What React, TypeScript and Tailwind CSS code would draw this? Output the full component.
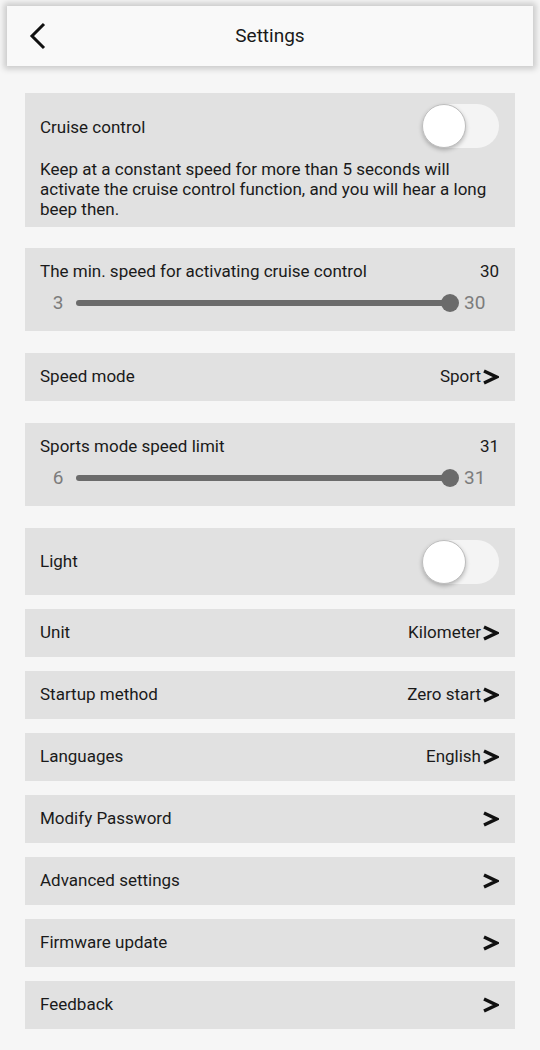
import React from "react";

const font = { fontFamily: "Roboto, 'Noto Sans', sans-serif" };

function Toggle() {
  return (
    <div className="relative w-[77px] h-[44px] rounded-full bg-[#f4f4f4]">
      <div className="absolute left-0 top-0 w-[44px] h-[44px] rounded-full bg-white border border-[#bdbdbd] shadow-[0_2px_4px_rgba(0,0,0,0.25)]" />
    </div>
  );
}

function Chevron() {
  return (
    <svg width="17" height="18" viewBox="0 0 17 18" className="ml-[1px]">
      <path d="M2 3 L14.5 9 L2 15" fill="none" stroke="#111" strokeWidth="3.4" strokeLinejoin="miter" />
    </svg>
  );
}

function Slider({ title, min, max }: { title: string; min: string; max: string }) {
  return (
    <div className="bg-[#e1e1e1] h-[83px] px-[15px] pt-[12px]">
      <div className="flex justify-between text-[17px] text-[#1a1a1a] leading-[22px]">
        <span>{title}</span>
        <span className="pr-[1px]">{max}</span>
      </div>
      <div className="flex items-center mt-[11px] h-[20px]">
        <span className="w-[36px] text-center text-[19px] text-[#7c7c7c]">{min}</span>
        <div className="relative flex-1 h-[6px] rounded-full bg-[#6b6b6b]">
          <div className="absolute right-[-9px] top-[-6px] w-[18px] h-[18px] rounded-full bg-[#6b6b6b]" />
        </div>
        <span className="w-[50px] pl-[14px] text-[19px] text-[#7c7c7c]">{max}</span>
      </div>
    </div>
  );
}

function NavRow({ label, value }: { label: string; value?: string }) {
  return (
    <div className="bg-[#e1e1e1] h-[48px] pl-[15px] pr-[16px] flex items-center justify-between text-[17px] text-[#1a1a1a]">
      <span>{label}</span>
      <span className="flex items-center">
        {value && <span>{value}</span>}
        <Chevron />
      </span>
    </div>
  );
}

export default function App() {
  return (
    <div style={font} className="w-[540px] h-[1050px] bg-[#f6f6f6] overflow-hidden pt-[6px]">
      <div className="mx-[7px] h-[60px] bg-[#f9f9f9] shadow-[0_0_6px_3px_rgba(0,0,0,0.18)] flex items-center relative">
        <svg width="20" height="28" viewBox="0 0 20 28" className="absolute left-[21px] top-[16px]">
          <path d="M16 2 L4 14 L16 26" fill="none" stroke="#111" strokeWidth="3" />
        </svg>
        <div className="w-full text-center text-[19px] text-[#1a1a1a]">Settings</div>
      </div>

      <div className="px-[25px] pt-[27px] flex flex-col">
        <div className="bg-[#e1e1e1] h-[134px] px-[15px] pt-[11px]">
          <div className="flex items-center justify-between pr-[1px]">
            <span className="text-[17px] text-[#1a1a1a] pt-[4px]">Cruise control</span>
            <Toggle />
          </div>
          <p className="mt-[11px] text-[17px] leading-[20px] text-[#1a1a1a] pr-[4px]">
            Keep at a constant speed for more than 5 seconds will activate the cruise control function, and you will hear a long beep then.
          </p>
        </div>

        <div className="mt-[21px]">
          <Slider title="The min. speed for activating cruise control" min="3" max="30" />
        </div>

        <div className="mt-[22px]">
          <NavRow label="Speed mode" value="Sport" />
        </div>

        <div className="mt-[22px]">
          <Slider title="Sports mode speed limit" min="6" max="31" />
        </div>

        <div className="mt-[22px] bg-[#e1e1e1] h-[67px] pl-[15px] pr-[16px] flex items-center justify-between">
          <span className="text-[17px] text-[#1a1a1a]">Light</span>
          <Toggle />
        </div>

        <div className="mt-[14px] flex flex-col gap-[14px]">
          <NavRow label="Unit" value="Kilometer" />
          <NavRow label="Startup method" value="Zero start" />
          <NavRow label="Languages" value="English" />
          <NavRow label="Modify Password" />
          <NavRow label="Advanced settings" />
          <NavRow label="Firmware update" />
          <NavRow label="Feedback" />
        </div>
      </div>
    </div>
  );
}
